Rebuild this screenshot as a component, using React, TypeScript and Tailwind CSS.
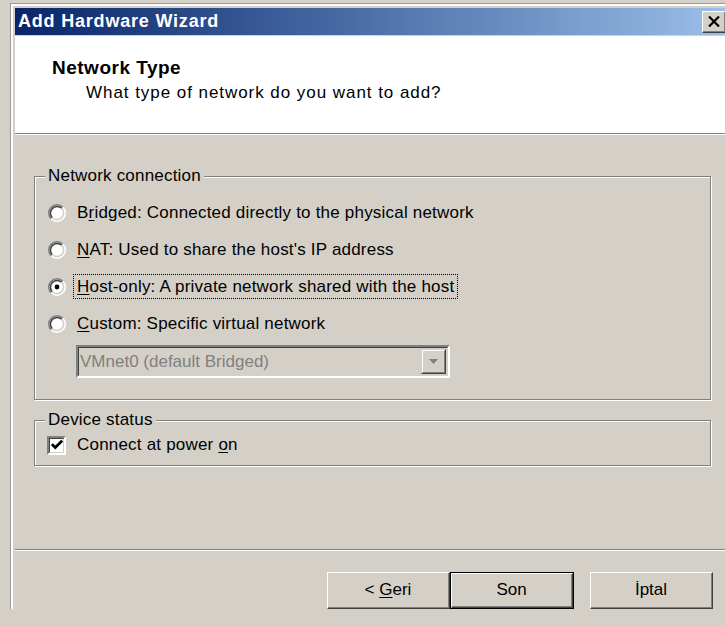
import type { ReactNode } from "react";

const FONT = "font-['Liberation_Sans',Arial,sans-serif]";

function Radio({ checked }: { checked?: boolean }) {
  return (
    <svg width="18" height="18" viewBox="0 0 12 12" className="shrink-0">
      <circle cx="6" cy="6" r="5" fill="#fff" />
      <path d="M2.11 9.89A5.5 5.5 0 0 1 9.89 2.11" fill="none" stroke="#808080" strokeWidth="1" />
      <path d="M2.82 9.18A4.5 4.5 0 0 1 9.18 2.82" fill="none" stroke="#404040" strokeWidth="1" />
      <path d="M9.89 2.11A5.5 5.5 0 0 1 2.11 9.89" fill="none" stroke="#ffffff" strokeWidth="1" />
      <path d="M9.18 2.82A4.5 4.5 0 0 1 2.82 9.18" fill="none" stroke="#d4d0c8" strokeWidth="1" />
      {checked && <circle cx="6" cy="6" r="1.6" fill="#000" />}
    </svg>
  );
}

function Checkbox() {
  return (
    <div className="w-[19px] h-[19px] shrink-0 border-2 border-t-[#808080] border-l-[#808080] border-b-white border-r-white">
      <div className="w-full h-full bg-white border-[1px] border-t-[#404040] border-l-[#404040] border-b-[#d4d0c8] border-r-[#d4d0c8] flex items-center justify-center">
        <svg width="12" height="12" viewBox="0 0 7 7">
          <path d="M0.5 3 L2.5 5 L6.5 1" fill="none" stroke="#000" strokeWidth="1.6" />
        </svg>
      </div>
    </div>
  );
}

function Raised({ children, className = "" }: { children: ReactNode; className?: string }) {
  return (
    <div className={`border-[1px] border-t-white border-l-white border-b-[#404040] border-r-[#404040] ${className}`}>
      <div className="w-full h-full border-b-[1px] border-r-[1px] border-[#808080] flex items-center justify-center">
        {children}
      </div>
    </div>
  );
}

function Group({ title, children, className = "" }: { title: string; children: ReactNode; className?: string }) {
  return (
    <fieldset
      className={`border border-[#808080] shadow-[inset_1px_1px_0_#fff,1px_1px_0_#fff] ml-[19px] w-[677px] px-[13px] ${className}`}
    >
      <legend className="-ml-[3px] px-[3px] h-[20px] leading-[20px] bg-[#d4d0c8] tracking-[0.2px]">{title}</legend>
      {children}
    </fieldset>
  );
}

function Option({ checked, children }: { checked?: boolean; children: ReactNode }) {
  return (
    <div className="h-[37px] flex items-center">
      <Radio checked={checked} />
      <div className="ml-[11px] tracking-[0.2px]">{children}</div>
    </div>
  );
}

export default function App() {
  return (
    <div className={`w-[725px] h-[626px] overflow-hidden bg-[#d4d0c8] text-black text-[17px] ${FONT}`}>
      {/* window frame */}
      <div className="mt-[3px] ml-[10px] w-[760px] border-t border-l border-[#9a9a9a]">
        <div className="border-t-2 border-l-2 border-white">
          <div className="pt-[2px] pl-[2px]">
            {/* caption */}
            <div className="h-[27px] flex items-center justify-between bg-gradient-to-r from-[#0a246a] to-[#a6caf0] pl-[3px] pr-[44px]">
              <span className="text-white font-bold text-[18px] tracking-[0.8px]">Add Hardware Wizard</span>
              <Raised className="w-[24px] h-[22px] bg-[#d4d0c8]">
                <svg width="12" height="11" viewBox="0 0 12 11">
                  <path d="M1 0.5 L11 10.5 M11 0.5 L1 10.5" stroke="#000" strokeWidth="2.2" />
                </svg>
              </Raised>
            </div>
            <div className="h-px bg-[#d4d0c8]" />

            {/* header */}
            <div className="h-[98px] bg-white border-b border-[#808080] pt-[20px]">
              <div className="ml-[37px] font-bold text-[19px] tracking-[0.5px] leading-[24px]">Network Type</div>
              <div className="ml-[71px] leading-[25px] tracking-[0.95px]">What type of network do you want to add?</div>
            </div>
            <div className="h-px bg-white" />

            {/* body */}
            <div className="h-[414px] pt-[31px]">
              <Group title="Network connection" className="pt-[8px] pb-[21px]">
                <Option>
                  <span>
                    B<u className="underline-offset-2">r</u>idged: Connected directly to the physical network
                  </span>
                </Option>
                <Option>
                  <span>
                    <u className="underline-offset-2">N</u>AT: Used to share the host's IP address
                  </span>
                </Option>
                <Option checked>
                  <span className="-ml-[4px] px-[3px] py-[2px] border border-dotted border-black">
                    <u className="underline-offset-2">H</u>ost-only: A private network shared with the host
                  </span>
                </Option>
                <Option>
                  <span>
                    <u className="underline-offset-2">C</u>ustom: Specific virtual network
                  </span>
                </Option>
                {/* disabled combo */}
                <div className="mt-[3px] ml-[28px] w-[374px] h-[33px] border-2 border-t-[#808080] border-l-[#808080] border-b-white border-r-white">
                  <div className="w-full h-full border-[1px] border-t-[#404040] border-l-[#404040] border-b-[#d4d0c8] border-r-[#d4d0c8] flex items-center justify-between pl-[1px] pr-[1px]">
                    <span className="text-[#808080]">VMnet0 (default Bridged)</span>
                    <div className="w-[25px] h-[25px] border-[1px] border-t-[#d4d0c8] border-l-[#d4d0c8] border-b-[#404040] border-r-[#404040]">
                      <div className="w-full h-full border-[1px] border-t-white border-l-white border-b-[#808080] border-r-[#808080] flex items-center justify-center">
                        <svg width="11" height="7" viewBox="0 0 11 7">
                          <path d="M1 1 H10 L5.5 6 Z" fill="#808080" />
                        </svg>
                      </div>
                    </div>
                  </div>
                </div>
              </Group>

              <Group title="Device status" className="mt-[10px] pb-[5px]">
                <div className="h-[30px] flex items-center">
                  <div className="-ml-[1px]">
                    <Checkbox />
                  </div>
                  <span className="ml-[11px] tracking-[0.2px]">
                    Connect at power <u className="underline-offset-2">o</u>n
                  </span>
                </div>
              </Group>
            </div>

            {/* separator + buttons */}
            <div className="h-px bg-[#808080]" />
            <div className="h-px bg-white" />
            <div className="pt-[21px] pl-[312px] flex items-start">
              <Raised className="w-[123px] h-[37px]">
                <span>
                  &lt; <u className="underline-offset-2">G</u>eri
                </span>
              </Raised>
              <div className="w-[124px] h-[37px] border border-black">
                <Raised className="w-full h-full">
                  <span>Son</span>
                </Raised>
              </div>
              <Raised className="ml-[16px] w-[123px] h-[37px]">
                <span>İptal</span>
              </Raised>
            </div>
          </div>
        </div>
      </div>
    </div>
  );
}
